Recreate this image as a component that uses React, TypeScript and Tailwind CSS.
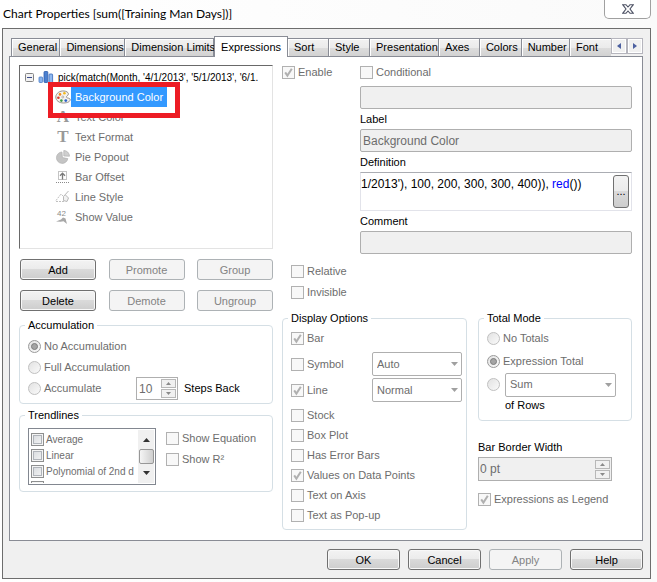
import React, { useState } from 'react';
import clsx from 'clsx';

interface CheckProps {
  label: string;
  checked?: boolean;
  className?: string;
}

const TABS = [
  'General',
  'Dimensions',
  'Dimension Limits',
  'Expressions',
  'Sort',
  'Style',
  'Presentation',
  'Axes',
  'Colors',
  'Number',
  'Font',
];

const TRENDLINES = ['Average', 'Linear', 'Polynomial of 2nd d', 'Polynomial of 3rd d'];

const CheckBox: React.FC<CheckProps> = ({ label, checked = false, className }) => (
  <label className={clsx('flex items-center gap-[3px] whitespace-nowrap text-[#6d6d6d]', className)}>
    <span className="grid shrink-0">
      <input
        type="checkbox"
        disabled
        checked={checked}
        readOnly
        className="col-start-1 row-start-1 size-[13px] appearance-none border border-[#b1b1b1] bg-[#f8f8f8]"
      />
      {checked && (
        <svg viewBox="0 0 13 13" className="col-start-1 row-start-1 size-[13px]" aria-hidden="true">
          <path d="M3.2 6.4 L5.4 9.6 L9.8 2.8" fill="none" stroke="#b0b0b0" strokeWidth="2" />
        </svg>
      )}
    </span>
    {label}
  </label>
);

interface RadioProps {
  name: string;
  label?: string;
  ariaLabel?: string;
  checked?: boolean;
}

const Radio: React.FC<RadioProps> = ({ name, label, ariaLabel, checked = false }) => (
  <label className="flex items-center gap-[3px] whitespace-nowrap text-[#6d6d6d]">
    <span className="grid shrink-0 place-items-center">
      <input
        type="radio"
        name={name}
        aria-label={ariaLabel}
        disabled
        checked={checked}
        readOnly
        className={clsx(
          'col-start-1 row-start-1 size-[13px] appearance-none rounded-full border bg-linear-to-br from-[#e2e2e2] to-[#fafafa]',
          checked ? 'border-[#9a9a9a]' : 'border-[#c0c0c0]'
        )}
      />
      {checked && (
        <span className="col-start-1 row-start-1 size-[7px] rounded-full border border-[#7d7d7d] bg-[#a4a4a4]" />
      )}
    </span>
    {label}
  </label>
);

const Select: React.FC<{ value: string; label: string; className?: string }> = ({
  value,
  label,
  className,
}) => (
  <span className={clsx('grid items-center', className)}>
    <select
      disabled
      aria-label={label}
      className="col-start-1 row-start-1 h-6 w-full appearance-none rounded-[2px] border border-[#afafaf] bg-white pl-1 text-[#6d6d6d] opacity-100"
    >
      <option>{value}</option>
    </select>
    <svg
      viewBox="0 0 7 4"
      className="col-start-1 row-start-1 mr-1 h-1 w-[7px] justify-self-end"
      aria-hidden="true"
    >
      <path d="M0 0 H7 L3.5 4 Z" fill="#a0a0a0" />
    </svg>
  </span>
);

const Spinner: React.FC = () => (
  <span className="flex w-[15px] shrink-0 flex-col gap-px">
    {['M0 3 H5 L2.5 0 Z', 'M0 0 H5 L2.5 3 Z'].map((d, i) => (
      <button
        key={d}
        type="button"
        disabled
        aria-label={i === 0 ? 'Increase' : 'Decrease'}
        className="grid h-[9px] place-items-center border border-[#b8b8b8] bg-[#f1f1f1]"
      >
        <svg viewBox="0 0 5 3" className="h-[3px] w-[5px]">
          <path d={d} fill="#8a8a8a" />
        </svg>
      </button>
    ))}
  </span>
);

const PushButton: React.FC<{ label: string; disabled?: boolean; className?: string }> = ({
  label,
  disabled = false,
  className,
}) => (
  <button
    type="button"
    disabled={disabled}
    className={clsx(
      'h-[21px] rounded-[3px] border text-center leading-5',
      disabled
        ? 'border-[#adb2b5] bg-[#f4f4f4] text-[#838383]'
        : 'border-[#707070] bg-[linear-gradient(#f3f3f3_0%,#ebebeb_50%,#dadada_50%,#cdcdcd_100%)] text-black shadow-[inset_0_0_0_1px_#f8f8f8]',
      className
    )}
  >
    {label}
  </button>
);

const Group: React.FC<{ title: string; className?: string; children: React.ReactNode }> = ({
  title,
  className,
  children,
}) => (
  <fieldset className={clsx('min-w-0 rounded-[4px] border border-[#d5dfe5] pl-2', className)}>
    <legend className="-ml-[3px] px-[3px] leading-[14px]">{title}</legend>
    {children}
  </fieldset>
);

/* Tree icons, all on a 16x16 grid */
const BarsIcon = () => (
  <svg viewBox="0 0 16 16" className="size-4">
    <rect x="1" y="8" width="3.6" height="5.5" rx=".8" fill="#8ab4ec" stroke="#4a7cc8" strokeWidth=".8" />
    <rect x="6" y="2.5" width="3.8" height="11" rx=".8" fill="#4a80d0" stroke="#2d5cab" strokeWidth=".8" />
    <rect x="11" y="5" width="3.6" height="8.5" rx=".8" fill="#8fb9f0" stroke="#3566b8" strokeWidth=".8" />
  </svg>
);

const PaletteIcon = () => (
  <svg viewBox="0 0 16 16" className="size-4">
    <path
      d="M9 2 C5 1.4 .8 4.4 .8 8 C.8 11.5 4 14 8.5 14 C12.5 14 15.2 12.6 15.2 10.6 C15.2 8.8 12 9.4 11.4 8.2 C11 7.2 13.6 6.6 13.4 4.8 C13.2 3.2 11.4 2.2 9 2 Z"
      fill="#f4f2ee"
      stroke="#8a8680"
      strokeWidth=".9"
    />
    <circle cx="5" cy="5.4" r="1.3" fill="#f08a1c" />
    <circle cx="9.4" cy="4.3" r="1.3" fill="#f0b81c" />
    <circle cx="3.4" cy="8.8" r="1.3" fill="#d83a2c" />
    <circle cx="6.4" cy="11.6" r="1.3" fill="#3d9a46" />
    <circle cx="10.8" cy="11.6" r="1.4" fill="#2d62c8" />
    <circle cx="7.8" cy="8" r="1" fill="#fff" stroke="#8a8680" strokeWidth=".6" />
  </svg>
);

const LetterIcon = ({ children }: { children: string }) => (
  <span
    className="w-4 text-center font-['Liberation_Serif',serif] text-[17px] leading-4 font-bold text-[#999999]"
    aria-hidden="true"
  >
    {children}
  </span>
);

const PieIcon = () => (
  <svg viewBox="0 0 16 16" className="size-4">
    <path d="M7 3 A5.7 5.7 0 1 0 12.8 9.6 L7.4 8.6 Z" fill="#c4c4c4" stroke="#b0b0b0" strokeWidth=".7" />
    <path d="M8.8 1.5 A5.8 5.8 0 0 1 14.5 7.2 L8.8 7 Z" fill="#cfcfcf" stroke="#b0b0b0" strokeWidth=".7" />
  </svg>
);

const OffsetIcon = () => (
  <svg viewBox="0 0 16 16" className="size-4">
    <rect x="3.5" y="2.5" width="8" height="8" fill="#fff" stroke="#c4c4c4" />
    <path d="M7.5 10.5 V4.5 M5 6.8 L7.5 4.2 L10 6.8" fill="none" stroke="#7a7a7a" strokeWidth="1.3" />
    <path d="M1 13.5 H14" stroke="#8a8a8a" strokeDasharray="1 1" />
  </svg>
);

const LineIcon = () => (
  <svg viewBox="0 0 16 16" className="size-4">
    <path d="M1 11.5 L6 5 L9 8" fill="none" stroke="#c0c0c0" strokeDasharray="2 1" />
    <path d="M1 12.5 H9" stroke="#c0c0c0" strokeDasharray="2 1" />
    <path d="M13.5 2 L8.5 7.5 L8.5 11.5 L12 12.5 L13.5 9 L10.5 6" fill="#f2f2f2" stroke="#b8b8b8" />
  </svg>
);

const ValueIcon = () => (
  <svg viewBox="0 0 16 16" className="size-4">
    <text x="2" y="7" fontSize="8" fontFamily="Liberation Sans, sans-serif" fill="#8a8a8a">
      42
    </text>
    <path d="M1 12.5 L6 10.6 L8 8.6 L10.5 9.5 L12 15 L8.5 12.2 L5.5 12.8 Z" fill="#a8a8a8" />
  </svg>
);

const TREE_ITEMS = [
  { label: 'Background Color', icon: <PaletteIcon /> },
  { label: 'Text Color', icon: <LetterIcon>A</LetterIcon> },
  { label: 'Text Format', icon: <LetterIcon>T</LetterIcon> },
  { label: 'Pie Popout', icon: <PieIcon /> },
  { label: 'Bar Offset', icon: <OffsetIcon /> },
  { label: 'Line Style', icon: <LineIcon /> },
  { label: 'Show Value', icon: <ValueIcon /> },
];

const ExpressionTree: React.FC = () => {
  const [selected, setSelected] = useState('Background Color');

  return (
    <div className="relative h-[184px] border border-t-[#696969] border-r-[#e3e3e3] border-b-[#e3e3e3] border-l-[#696969] pt-px">
      <ul role="tree" aria-label="Expressions">
        <li
          role="treeitem"
          aria-expanded="true"
          className="flex h-5 items-center pl-[5px] text-[10px] whitespace-nowrap"
        >
          <svg viewBox="0 0 9 9" className="size-[9px] shrink-0">
            <rect x=".5" y=".5" width="8" height="8" rx="1" fill="#f2f2f2" stroke="#848484" />
            <path d="M2 4.5 H7" stroke="#3a4b8a" />
          </svg>
          <span className="mr-1 ml-1 shrink-0">
            <BarsIcon />
          </span>
          pick(match(Month, &#39;4/1/2013&#39;, &#39;5/1/2013&#39;, &#39;6/1.
        </li>
        {TREE_ITEMS.map(({ label, icon }) => (
          <li
            key={label}
            role="treeitem"
            aria-selected={selected === label}
            onClick={() => setSelected(label)}
            className="flex h-5 items-center pl-[35px]"
          >
            {icon}
            <span
              className={clsx(
                'h-5 px-1 leading-5',
                selected === label ? 'bg-[#3399ff] text-white' : 'text-[#6d6d6d]'
              )}
            >
              {label}
            </span>
          </li>
        ))}
      </ul>
      <div className="pointer-events-none absolute top-4 left-7 h-[36px] w-[132px] border-[5px] border-[#ed1c24]" />
    </div>
  );
};

const TrendlineList: React.FC = () => (
  <div className="flex h-[57px] w-[128px] border border-[#828790] py-px pr-px">
    <ul className="min-w-0 flex-1 overflow-hidden pt-px pl-0.5 text-[10px]">
      {TRENDLINES.map((name) => (
        <li key={name}>
          <label className="flex h-4 items-center gap-0.5 whitespace-nowrap text-[#6d6d6d]">
            <input
              type="checkbox"
              disabled
              className="size-[13px] shrink-0 appearance-none border border-[#8e8f8f] bg-linear-to-br from-[#d5d8dc] to-[#f6f6f6] shadow-[inset_0_0_0_1px_#f4f4f4,inset_0_0_0_2px_#b0b4ba]"
            />
            {name}
          </label>
        </li>
      ))}
    </ul>
    <div className="flex w-4 flex-col items-center justify-between bg-[#f0f0f0] py-2" aria-hidden="true">
      <svg viewBox="0 0 7 4" className="h-1 w-[7px]">
        <path d="M0 4 H7 L3.5 0 Z" fill="#333" />
      </svg>
      <span className="h-[15px] w-[15px] rounded-[2px] border border-[#979797] bg-linear-to-r from-[#f5f5f5] to-[#cfcfcf]" />
      <svg viewBox="0 0 7 4" className="h-1 w-[7px]">
        <path d="M0 0 H7 L3.5 4 Z" fill="#333" />
      </svg>
    </div>
  </div>
);

const fieldClass =
  'h-[23px] w-full rounded-[2px] border border-[#afafaf] bg-[#f0f0f0] px-0.5 text-[12px] text-[#6d6d6d]';

const DefinitionFields: React.FC = () => {
  const [definition, setDefinition] = useState("1/2013'), 100, 200, 300, 300, 400)), red())");

  return (
    <div className="flex min-w-0 flex-1 flex-col">
      <CheckBox label="Conditional" className="h-[15px]" />
      <input type="text" disabled aria-label="Condition" className={clsx(fieldClass, 'mt-1.5')} />
      <label htmlFor="label" className="leading-5">
        Label
      </label>
      <input id="label" type="text" disabled value="Background Color" readOnly className={fieldClass} />
      <label htmlFor="definition" className="leading-5">
        Definition
      </label>
      <div className="flex h-[39px] items-start border border-[#e2e3ea] border-t-[#abadb3] pt-0.5 pr-0.5">
        {/* the highlighted copy sits under the editable text */}
        <div className="grid min-w-0 flex-1 overflow-hidden text-[12px] leading-[18px] whitespace-nowrap">
          <div className="col-start-1 row-start-1" aria-hidden="true">
            {definition.split(/(red)/).map((part, i) => (
              <span key={i} className={part === 'red' ? 'text-[#0000ff]' : 'text-black'}>
                {part}
              </span>
            ))}
          </div>
          <textarea
            id="definition"
            rows={1}
            value={definition}
            onChange={(e) => setDefinition(e.target.value)}
            className="col-start-1 row-start-1 resize-none overflow-hidden bg-transparent whitespace-nowrap text-transparent caret-black outline-none"
          />
        </div>
        <button
          type="button"
          aria-label="Edit expression"
          className="h-[33px] w-4 rounded-[3px] border border-[#707070] bg-[linear-gradient(#f3f3f3_0%,#ebebeb_50%,#dadada_50%,#cdcdcd_100%)]"
        >
          ...
        </button>
      </div>
      <label htmlFor="comment" className="leading-5">
        Comment
      </label>
      <input id="comment" type="text" disabled className={fieldClass} />
    </div>
  );
};

const TabStrip: React.FC = () => (
  <div role="tablist" className="flex h-5 items-end pl-0.5">
    {TABS.map((tab) => {
      const active = tab === 'Expressions';
      return (
        <button
          key={tab}
          type="button"
          role="tab"
          aria-selected={active}
          className={clsx(
            'border border-b-0 border-[#898c95] px-1.5 text-left whitespace-nowrap',
            active
              ? 'z-10 -mb-px h-[21px] bg-white'
              : 'h-[18px] min-w-[41px] bg-[linear-gradient(#f2f2f2_0%,#ebebeb_50%,#dddddd_50%,#d2d2d2_100%)] shadow-[inset_1px_1px_0_#fff]',
            !active && tab !== 'General' && 'border-l-0',
            tab === 'Font' && 'min-w-0 flex-1 overflow-hidden border-r-0'
          )}
        >
          {tab}
        </button>
      );
    })}
    <div className="flex self-center">
      {['M4 0 V6 L0 3 Z', 'M0 0 V6 L4 3 Z'].map((d, i) => (
        <button
          key={d}
          type="button"
          aria-label={i === 0 ? 'Scroll tabs left' : 'Scroll tabs right'}
          className="grid h-4 w-4 place-items-center border border-[#b5b5bd] bg-[#f0f0f0] shadow-[inset_0_0_0_1px_#fff]"
        >
          <svg viewBox="0 0 4 6" className="h-1.5 w-1">
            <path d={d} fill="#4c60a0" />
          </svg>
        </button>
      ))}
    </div>
  </div>
);

export default function App() {
  return (
    <main className="min-h-screen bg-linear-to-r from-white to-[#fafafa] pr-1.5 pl-0.5 font-['Liberation_Sans',Arial,sans-serif] text-[11px] text-black">
      <header className="flex h-7 items-start justify-between">
        <h1 className="pl-px font-[Lato,sans-serif] text-[12px] leading-7">
          Chart Properties [sum([Training Man Days])]
        </h1>
        <button
          type="button"
          aria-label="Close"
          className="grid h-[19px] w-[47px] place-items-center rounded-b-[5px] border border-t-0 border-[#a0a0a0] bg-white"
        >
          <svg viewBox="0 0 12 10" className="h-2.5 w-3">
            <path
              d="M.7 .7 H4 L6 3 L8 .7 H11.3 L8 5 L11.3 9.3 H8 L6 7 L4 9.3 H.7 L4 5 Z"
              fill="#fff"
              stroke="#4d5264"
              strokeWidth="1.1"
            />
          </svg>
        </button>
      </header>

      <div className="border border-[#6d6d6d] bg-[#f0f0f0] pt-[7px] pr-[7px] pb-2 pl-1.5">
        <TabStrip />

        <section className="flex gap-[9px] border border-[#898c95] bg-white pt-2 pr-2.5 pb-2.5 pl-[9px]">
          <div className="w-[254px] shrink-0">
            <ExpressionTree />

            <div className="mt-2.5 flex flex-col gap-2.5 pl-px">
              <div className="flex justify-between">
                <PushButton label="Add" className="w-[76px]" />
                <PushButton label="Promote" disabled className="w-[76px]" />
                <PushButton label="Group" disabled className="w-[76px]" />
              </div>
              <div className="flex justify-between">
                <PushButton label="Delete" className="w-[76px]" />
                <PushButton label="Demote" disabled className="w-[76px]" />
                <PushButton label="Ungroup" disabled className="w-[76px]" />
              </div>
            </div>

            <Group title="Accumulation" className="mt-[7px] pt-1 pb-1">
              <div className="flex h-[21px] items-center">
                <Radio name="accumulation" label="No Accumulation" checked />
              </div>
              <div className="flex h-[21px] items-center">
                <Radio name="accumulation" label="Full Accumulation" />
              </div>
              <div className="flex h-[21px] items-center">
                <span className="w-[108px]">
                  <Radio name="accumulation" label="Accumulate" />
                </span>
                <span className="flex h-[23px] w-[42px] items-center border border-[#afafaf] bg-white pr-px">
                  <input
                    id="steps"
                    type="text"
                    disabled
                    value="10"
                    readOnly
                    className="min-w-0 flex-1 pl-0.5 text-[12px] text-[#6d6d6d]"
                  />
                  <Spinner />
                </span>
                <label htmlFor="steps" className="ml-1.5">
                  Steps Back
                </label>
              </div>
            </Group>

            <Group title="Trendlines" className="mt-1 pt-1.5 pb-1.5">
              <div className="flex gap-2.5">
                <TrendlineList />
                <div>
                  <CheckBox label="Show Equation" className="h-[21px]" />
                  <CheckBox label="Show R²" className="h-[21px]" />
                </div>
              </div>
            </Group>
          </div>

          <div className="min-w-0 flex-1">
            <div className="flex">
              <CheckBox label="Enable" checked className="h-[15px] w-[78px]" />
              <DefinitionFields />
            </div>

            <div className="mt-[7px] pl-[9px]">
              <CheckBox label="Relative" className="h-[21px]" />
              <CheckBox label="Invisible" className="h-[21px]" />
            </div>

            <div className="mt-2 flex items-start gap-[11px]">
              <Group title="Display Options" className="w-[185px] shrink-0 pb-1">
                <CheckBox label="Bar" checked className="h-[26px]" />
                <div className="flex h-[26px] items-center">
                  <CheckBox label="Symbol" className="w-[81px]" />
                  <Select label="Symbol type" value="Auto" className="w-[90px]" />
                </div>
                <div className="mb-0.5 flex h-[26px] items-center">
                  <CheckBox label="Line" checked className="w-[81px]" />
                  <Select label="Line type" value="Normal" className="w-[90px]" />
                </div>
                <CheckBox label="Stock" className="h-5" />
                <CheckBox label="Box Plot" className="h-5" />
                <CheckBox label="Has Error Bars" className="h-5" />
                <CheckBox label="Values on Data Points" checked className="h-5" />
                <CheckBox label="Text on Axis" className="h-5" />
                <CheckBox label="Text as Pop-up" className="h-5" />
              </Group>

              <div className="min-w-0 flex-1">
                <Group title="Total Mode" className="pt-0.5 pb-1.5">
                  <div className="flex h-[23px] items-center">
                    <Radio name="total" label="No Totals" />
                  </div>
                  <div className="flex h-[23px] items-center">
                    <Radio name="total" label="Expression Total" checked />
                  </div>
                  <div className="flex h-[23px] items-center gap-[5px]">
                    <Radio name="total" ariaLabel="Aggregate of rows" />
                    <Select label="Aggregation" value="Sum" className="w-[111px]" />
                  </div>
                  <p className="pl-[18px] leading-[18px]">of Rows</p>
                </Group>

                <label htmlFor="border-width" className="mt-4 block leading-5">
                  Bar Border Width
                </label>
                <span className="flex h-6 w-[134px] items-center border border-[#afafaf] bg-[#f0f0f0] pr-px">
                  <input
                    id="border-width"
                    type="text"
                    disabled
                    value="0 pt"
                    readOnly
                    className="min-w-0 flex-1 pl-px text-[12px] text-[#6d6d6d]"
                  />
                  <Spinner />
                </span>
                <CheckBox label="Expressions as Legend" checked className="mt-2 h-[21px]" />
              </div>
            </div>
          </div>
        </section>

        <footer className="mt-2 flex justify-end gap-2">
          <PushButton label="OK" className="w-[73px]" />
          <PushButton label="Cancel" className="w-[73px]" />
          <PushButton label="Apply" disabled className="w-[73px]" />
          <PushButton label="Help" className="w-[73px]" />
        </footer>
      </div>
    </main>
  );
}
